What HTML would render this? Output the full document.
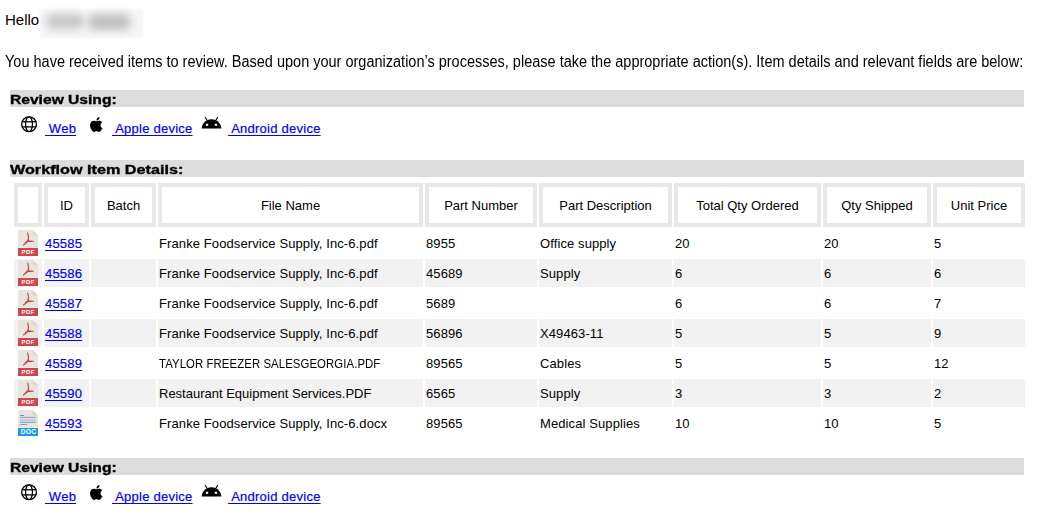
<!DOCTYPE html><html><head><meta charset="utf-8"><style>
*{margin:0;padding:0;box-sizing:border-box}
html,body{width:1050px;height:523px;overflow:hidden;background:#fff}
body{position:relative;font-family:"Liberation Sans", sans-serif;color:#000}
.a{position:absolute;white-space:pre}
.t{position:absolute;white-space:pre;font-size:13px;line-height:16px;letter-spacing:0.1px}
.bar{position:absolute;left:10px;width:1014px;height:17px;background:#dcdcdc}
.bt{position:absolute;left:10px;font-weight:bold;-webkit-text-stroke:0.35px #000;font-size:13px;line-height:16px;transform-origin:0 0;white-space:pre}
.lk{position:absolute;color:#0000ff;-webkit-text-stroke:0.2px #0000ff;text-decoration:underline;text-decoration-skip-ink:none;text-underline-offset:2px;font-size:13px;line-height:16px;white-space:pre}
.rl{letter-spacing:0.25px}
.hc{position:absolute;top:183px;height:44px;border:4px solid #e8e8e8;background:#fff;font-size:13px;line-height:38px;text-align:center;white-space:pre}
.c{position:absolute;height:28px}
.g{background:#f2f2f2}
svg{position:absolute;display:block}
</style></head><body>
<div class="a" style="left:5px;top:10px;font-size:15px;line-height:20px">Hello</div>
<div class="a" style="left:40px;top:9px;width:103px;height:29px;background:#f7f7f7;filter:blur(1px)"></div>
<div class="a" style="left:46px;top:14px;width:38px;height:15px;border-radius:7px;background:#c6c6c6;filter:blur(4px)"></div>
<div class="a" style="left:88px;top:14px;width:43px;height:16px;border-radius:7px;background:#c0c0c0;filter:blur(4px)"></div>
<div class="a" style="left:5px;top:52px;font-size:15.6px;line-height:20px;transform-origin:0 0;transform:scaleX(0.93)">You have received items to review. Based upon your organization’s processes, please take the appropriate action(s). Item details and relevant fields are below:</div>
<div class="bar" style="top:90px"></div>
<div class="bt" style="top:92px;transform:scaleX(1.2)">Review Using:</div>
<svg width="18" height="18" viewBox="0 0 18 18" style="left:20px;top:115px"><g fill="none" stroke="#000" stroke-width="1.3"><circle cx="9.06" cy="9.2" r="7.4"/><ellipse cx="9.0" cy="9.2" rx="3.45" ry="7.4"/><line x1="1.7" y1="6.76" x2="16.4" y2="6.76"/><line x1="1.7" y1="11.9" x2="16.4" y2="11.9"/></g></svg>
<div class="lk rl" style="left:45px;top:121px"> Web</div>
<svg width="14" height="16" viewBox="0 0 14 16" style="left:89px;top:117px"><path transform="translate(0.3,0.1) scale(0.97,0.92)" fill="#000" d="M11.6 8.5c0-2 1.6-2.9 1.7-3-0.9-1.4-2.4-1.6-2.9-1.6-1.2-0.1-2.4 0.7-3 0.7-0.6 0-1.6-0.7-2.6-0.7C3.400 3.900 2.100 4.700 1.400 6c-1.400 2.500-0.400 6.100 1 8.100 0.7 1 1.500 2.100 2.500 2 1-0.04 1.400-0.6 2.600-0.6 1.200 0 1.500 0.6 2.600 0.6 1.100 0 1.800-1 2.400-2 0.8-1.100 1.100-2.200 1.100-2.300-0.02 0-2.100-0.8-2.100-3.300zM9.700 2.500c0.5-0.7 0.9-1.600 0.8-2.500-0.8 0-1.700 0.5-2.300 1.200-0.5 0.6-0.9 1.500-0.8 2.400 0.9 0.07 1.700-0.4 2.300-1.100z"/></svg>
<div class="lk rl" style="left:112px;top:121px"> Apple device</div>
<svg width="23" height="14" viewBox="0 0 23 14" style="left:200px;top:116px"><path d="M1.6 12.4 C2.1 7 6 3.2 11.5 3.2 C17 3.2 20.9 7 21.4 12.4 Z" fill="#000"/><line x1="5.1" y1="1" x2="7.1" y2="4.5" stroke="#000" stroke-width="1.1"/><line x1="17.8" y1="1" x2="15.8" y2="4.5" stroke="#000" stroke-width="1.1"/><rect x="5.9" y="7.8" width="2.3" height="2" fill="#fff"/><rect x="14.8" y="7.8" width="2.3" height="2" fill="#fff"/></svg>
<div class="lk rl" style="left:228px;top:121px"> Android device</div>
<div class="bar" style="top:160px"></div>
<div class="bt" style="top:162px;transform:scaleX(1.245)">Workflow Item Details:</div>
<div class="hc" style="left:14px;width:28px"></div>
<div class="hc" style="left:44px;width:45px">ID</div>
<div class="hc" style="left:91px;width:65px">Batch</div>
<div class="hc" style="left:158px;width:265px">File Name</div>
<div class="hc" style="left:425px;width:112px">Part Number</div>
<div class="hc" style="left:539px;width:133px">Part Description</div>
<div class="hc" style="left:674px;width:147px">Total Qty Ordered</div>
<div class="hc" style="left:823px;width:108px">Qty Shipped</div>
<div class="hc" style="left:933px;width:92px">Unit Price</div>
<svg width="20" height="26" viewBox="0 0 20 26" style="left:18px;top:230px"><path d="M0 0H14.6L20 5.6V26H0Z" fill="#e7e5dd"/><path d="M14.6 0L20 5.6H14.6Z" fill="#d9d6ca"/><rect x="0" y="17.3" width="20" height="0.8" fill="#e3f2ea"/><rect x="0" y="18" width="20" height="8" fill="#d0454b"/><text x="10.3" y="24.2" font-family="Liberation Sans" font-weight="bold" font-size="6" fill="#fff" text-anchor="middle" letter-spacing="0.45">PDF</text><g fill="none" stroke="#cc3b43" stroke-width="1.1" stroke-linecap="round"><path d="M9.7 3.1 C10.4 5.2 10.6 8 10.2 9.7 C9.5 11.6 7.5 13.6 5.5 15"/><path d="M7.6 12.6 C10 11.5 13 11 15.3 11.3"/><path d="M10.2 9.7 C10.9 11 12.2 11.7 13.4 11.3"/></g></svg>
<div class="lk" style="left:45px;top:236px;letter-spacing:0.2px">45585</div>
<div class="t" style="left:159px;top:236px">Franke Foodservice Supply, Inc-6.pdf</div>
<div class="t" style="left:426px;top:236px">8955</div>
<div class="t" style="left:540px;top:236px">Office supply</div>
<div class="t" style="left:675px;top:236px">20</div>
<div class="t" style="left:824px;top:236px">20</div>
<div class="t" style="left:934px;top:236px">5</div>
<div class="c g" style="left:14px;top:259px;width:28px"></div>
<div class="c g" style="left:44px;top:259px;width:45px"></div>
<div class="c g" style="left:91px;top:259px;width:65px"></div>
<div class="c g" style="left:158px;top:259px;width:265px"></div>
<div class="c g" style="left:425px;top:259px;width:112px"></div>
<div class="c g" style="left:539px;top:259px;width:133px"></div>
<div class="c g" style="left:674px;top:259px;width:147px"></div>
<div class="c g" style="left:823px;top:259px;width:108px"></div>
<div class="c g" style="left:933px;top:259px;width:92px"></div>
<svg width="20" height="26" viewBox="0 0 20 26" style="left:18px;top:260px"><path d="M0 0H14.6L20 5.6V26H0Z" fill="#e7e5dd"/><path d="M14.6 0L20 5.6H14.6Z" fill="#d9d6ca"/><rect x="0" y="17.3" width="20" height="0.8" fill="#e3f2ea"/><rect x="0" y="18" width="20" height="8" fill="#d0454b"/><text x="10.3" y="24.2" font-family="Liberation Sans" font-weight="bold" font-size="6" fill="#fff" text-anchor="middle" letter-spacing="0.45">PDF</text><g fill="none" stroke="#cc3b43" stroke-width="1.1" stroke-linecap="round"><path d="M9.7 3.1 C10.4 5.2 10.6 8 10.2 9.7 C9.5 11.6 7.5 13.6 5.5 15"/><path d="M7.6 12.6 C10 11.5 13 11 15.3 11.3"/><path d="M10.2 9.7 C10.9 11 12.2 11.7 13.4 11.3"/></g></svg>
<div class="lk" style="left:45px;top:266px;letter-spacing:0.2px">45586</div>
<div class="t" style="left:159px;top:266px">Franke Foodservice Supply, Inc-6.pdf</div>
<div class="t" style="left:426px;top:266px">45689</div>
<div class="t" style="left:540px;top:266px">Supply</div>
<div class="t" style="left:675px;top:266px">6</div>
<div class="t" style="left:824px;top:266px">6</div>
<div class="t" style="left:934px;top:266px">6</div>
<svg width="20" height="26" viewBox="0 0 20 26" style="left:18px;top:290px"><path d="M0 0H14.6L20 5.6V26H0Z" fill="#e7e5dd"/><path d="M14.6 0L20 5.6H14.6Z" fill="#d9d6ca"/><rect x="0" y="17.3" width="20" height="0.8" fill="#e3f2ea"/><rect x="0" y="18" width="20" height="8" fill="#d0454b"/><text x="10.3" y="24.2" font-family="Liberation Sans" font-weight="bold" font-size="6" fill="#fff" text-anchor="middle" letter-spacing="0.45">PDF</text><g fill="none" stroke="#cc3b43" stroke-width="1.1" stroke-linecap="round"><path d="M9.7 3.1 C10.4 5.2 10.6 8 10.2 9.7 C9.5 11.6 7.5 13.6 5.5 15"/><path d="M7.6 12.6 C10 11.5 13 11 15.3 11.3"/><path d="M10.2 9.7 C10.9 11 12.2 11.7 13.4 11.3"/></g></svg>
<div class="lk" style="left:45px;top:296px;letter-spacing:0.2px">45587</div>
<div class="t" style="left:159px;top:296px">Franke Foodservice Supply, Inc-6.pdf</div>
<div class="t" style="left:426px;top:296px">5689</div>
<div class="t" style="left:540px;top:296px"></div>
<div class="t" style="left:675px;top:296px">6</div>
<div class="t" style="left:824px;top:296px">6</div>
<div class="t" style="left:934px;top:296px">7</div>
<div class="c g" style="left:14px;top:319px;width:28px"></div>
<div class="c g" style="left:44px;top:319px;width:45px"></div>
<div class="c g" style="left:91px;top:319px;width:65px"></div>
<div class="c g" style="left:158px;top:319px;width:265px"></div>
<div class="c g" style="left:425px;top:319px;width:112px"></div>
<div class="c g" style="left:539px;top:319px;width:133px"></div>
<div class="c g" style="left:674px;top:319px;width:147px"></div>
<div class="c g" style="left:823px;top:319px;width:108px"></div>
<div class="c g" style="left:933px;top:319px;width:92px"></div>
<svg width="20" height="26" viewBox="0 0 20 26" style="left:18px;top:320px"><path d="M0 0H14.6L20 5.6V26H0Z" fill="#e7e5dd"/><path d="M14.6 0L20 5.6H14.6Z" fill="#d9d6ca"/><rect x="0" y="17.3" width="20" height="0.8" fill="#e3f2ea"/><rect x="0" y="18" width="20" height="8" fill="#d0454b"/><text x="10.3" y="24.2" font-family="Liberation Sans" font-weight="bold" font-size="6" fill="#fff" text-anchor="middle" letter-spacing="0.45">PDF</text><g fill="none" stroke="#cc3b43" stroke-width="1.1" stroke-linecap="round"><path d="M9.7 3.1 C10.4 5.2 10.6 8 10.2 9.7 C9.5 11.6 7.5 13.6 5.5 15"/><path d="M7.6 12.6 C10 11.5 13 11 15.3 11.3"/><path d="M10.2 9.7 C10.9 11 12.2 11.7 13.4 11.3"/></g></svg>
<div class="lk" style="left:45px;top:326px;letter-spacing:0.2px">45588</div>
<div class="t" style="left:159px;top:326px">Franke Foodservice Supply, Inc-6.pdf</div>
<div class="t" style="left:426px;top:326px">56896</div>
<div class="t" style="left:540px;top:326px">X49463-11</div>
<div class="t" style="left:675px;top:326px">5</div>
<div class="t" style="left:824px;top:326px">5</div>
<div class="t" style="left:934px;top:326px">9</div>
<svg width="20" height="26" viewBox="0 0 20 26" style="left:18px;top:350px"><path d="M0 0H14.6L20 5.6V26H0Z" fill="#e7e5dd"/><path d="M14.6 0L20 5.6H14.6Z" fill="#d9d6ca"/><rect x="0" y="17.3" width="20" height="0.8" fill="#e3f2ea"/><rect x="0" y="18" width="20" height="8" fill="#d0454b"/><text x="10.3" y="24.2" font-family="Liberation Sans" font-weight="bold" font-size="6" fill="#fff" text-anchor="middle" letter-spacing="0.45">PDF</text><g fill="none" stroke="#cc3b43" stroke-width="1.1" stroke-linecap="round"><path d="M9.7 3.1 C10.4 5.2 10.6 8 10.2 9.7 C9.5 11.6 7.5 13.6 5.5 15"/><path d="M7.6 12.6 C10 11.5 13 11 15.3 11.3"/><path d="M10.2 9.7 C10.9 11 12.2 11.7 13.4 11.3"/></g></svg>
<div class="lk" style="left:45px;top:356px;letter-spacing:0.2px">45589</div>
<div class="t" style="left:159px;top:356px;transform-origin:0 0;transform:scaleX(0.874)">TAYLOR FREEZER SALESGEORGIA.PDF</div>
<div class="t" style="left:426px;top:356px">89565</div>
<div class="t" style="left:540px;top:356px">Cables</div>
<div class="t" style="left:675px;top:356px">5</div>
<div class="t" style="left:824px;top:356px">5</div>
<div class="t" style="left:934px;top:356px">12</div>
<div class="c g" style="left:14px;top:379px;width:28px"></div>
<div class="c g" style="left:44px;top:379px;width:45px"></div>
<div class="c g" style="left:91px;top:379px;width:65px"></div>
<div class="c g" style="left:158px;top:379px;width:265px"></div>
<div class="c g" style="left:425px;top:379px;width:112px"></div>
<div class="c g" style="left:539px;top:379px;width:133px"></div>
<div class="c g" style="left:674px;top:379px;width:147px"></div>
<div class="c g" style="left:823px;top:379px;width:108px"></div>
<div class="c g" style="left:933px;top:379px;width:92px"></div>
<svg width="20" height="26" viewBox="0 0 20 26" style="left:18px;top:380px"><path d="M0 0H14.6L20 5.6V26H0Z" fill="#e7e5dd"/><path d="M14.6 0L20 5.6H14.6Z" fill="#d9d6ca"/><rect x="0" y="17.3" width="20" height="0.8" fill="#e3f2ea"/><rect x="0" y="18" width="20" height="8" fill="#d0454b"/><text x="10.3" y="24.2" font-family="Liberation Sans" font-weight="bold" font-size="6" fill="#fff" text-anchor="middle" letter-spacing="0.45">PDF</text><g fill="none" stroke="#cc3b43" stroke-width="1.1" stroke-linecap="round"><path d="M9.7 3.1 C10.4 5.2 10.6 8 10.2 9.7 C9.5 11.6 7.5 13.6 5.5 15"/><path d="M7.6 12.6 C10 11.5 13 11 15.3 11.3"/><path d="M10.2 9.7 C10.9 11 12.2 11.7 13.4 11.3"/></g></svg>
<div class="lk" style="left:45px;top:386px;letter-spacing:0.2px">45590</div>
<div class="t" style="left:159px;top:386px;letter-spacing:0px">Restaurant Equipment Services.PDF</div>
<div class="t" style="left:426px;top:386px">6565</div>
<div class="t" style="left:540px;top:386px">Supply</div>
<div class="t" style="left:675px;top:386px">3</div>
<div class="t" style="left:824px;top:386px">3</div>
<div class="t" style="left:934px;top:386px">2</div>
<svg width="20" height="26" viewBox="0 0 20 26" style="left:18px;top:410px"><path d="M0 0H14.6L20 5.6V26H0Z" fill="#e7e5dd"/><path d="M14.6 0L20 5.6H14.6Z" fill="#d9d6ca"/><rect x="0" y="17.2" width="20" height="0.9" fill="#f6ead4"/><rect x="2" y="5.1" width="4" height="0.7" fill="#4e68c0"/><rect x="2" y="6.9" width="15.8" height="0.8" fill="#6f86cc"/><rect x="2" y="9.5" width="15.8" height="1.1" fill="#a9b8de"/><rect x="2" y="11.8" width="15.8" height="1" fill="#7a90d0"/><rect x="2" y="14" width="6.9" height="0.8" fill="#6f86cc"/><rect x="0" y="18" width="20" height="8" fill="#1b9ce2"/><text x="10.5" y="24.2" font-family="Liberation Sans" font-weight="bold" font-size="6.6" fill="#fff" text-anchor="middle" letter-spacing="0.2">DOC</text></svg>
<div class="lk" style="left:45px;top:416px;letter-spacing:0.2px">45593</div>
<div class="t" style="left:159px;top:416px">Franke Foodservice Supply, Inc-6.docx</div>
<div class="t" style="left:426px;top:416px">89565</div>
<div class="t" style="left:540px;top:416px">Medical Supplies</div>
<div class="t" style="left:675px;top:416px">10</div>
<div class="t" style="left:824px;top:416px">10</div>
<div class="t" style="left:934px;top:416px">5</div>
<div class="bar" style="top:458px"></div>
<div class="bt" style="top:460px;transform:scaleX(1.2)">Review Using:</div>
<svg width="18" height="18" viewBox="0 0 18 18" style="left:20px;top:483px"><g fill="none" stroke="#000" stroke-width="1.3"><circle cx="9.06" cy="9.2" r="7.4"/><ellipse cx="9.0" cy="9.2" rx="3.45" ry="7.4"/><line x1="1.7" y1="6.76" x2="16.4" y2="6.76"/><line x1="1.7" y1="11.9" x2="16.4" y2="11.9"/></g></svg>
<div class="lk rl" style="left:45px;top:489px"> Web</div>
<svg width="14" height="16" viewBox="0 0 14 16" style="left:89px;top:485px"><path transform="translate(0.3,0.1) scale(0.97,0.92)" fill="#000" d="M11.6 8.5c0-2 1.6-2.9 1.7-3-0.9-1.4-2.4-1.6-2.9-1.6-1.2-0.1-2.4 0.7-3 0.7-0.6 0-1.6-0.7-2.6-0.7C3.400 3.900 2.100 4.700 1.400 6c-1.400 2.500-0.400 6.100 1 8.100 0.7 1 1.500 2.100 2.500 2 1-0.04 1.400-0.6 2.600-0.6 1.200 0 1.500 0.6 2.600 0.6 1.100 0 1.800-1 2.400-2 0.8-1.100 1.100-2.200 1.100-2.300-0.02 0-2.100-0.8-2.100-3.300zM9.700 2.500c0.5-0.7 0.9-1.600 0.8-2.500-0.8 0-1.700 0.5-2.300 1.200-0.5 0.6-0.9 1.500-0.8 2.400 0.9 0.07 1.700-0.4 2.300-1.100z"/></svg>
<div class="lk rl" style="left:112px;top:489px"> Apple device</div>
<svg width="23" height="14" viewBox="0 0 23 14" style="left:200px;top:484px"><path d="M1.6 12.4 C2.1 7 6 3.2 11.5 3.2 C17 3.2 20.9 7 21.4 12.4 Z" fill="#000"/><line x1="5.1" y1="1" x2="7.1" y2="4.5" stroke="#000" stroke-width="1.1"/><line x1="17.8" y1="1" x2="15.8" y2="4.5" stroke="#000" stroke-width="1.1"/><rect x="5.9" y="7.8" width="2.3" height="2" fill="#fff"/><rect x="14.8" y="7.8" width="2.3" height="2" fill="#fff"/></svg>
<div class="lk rl" style="left:228px;top:489px"> Android device</div>
</body></html>
